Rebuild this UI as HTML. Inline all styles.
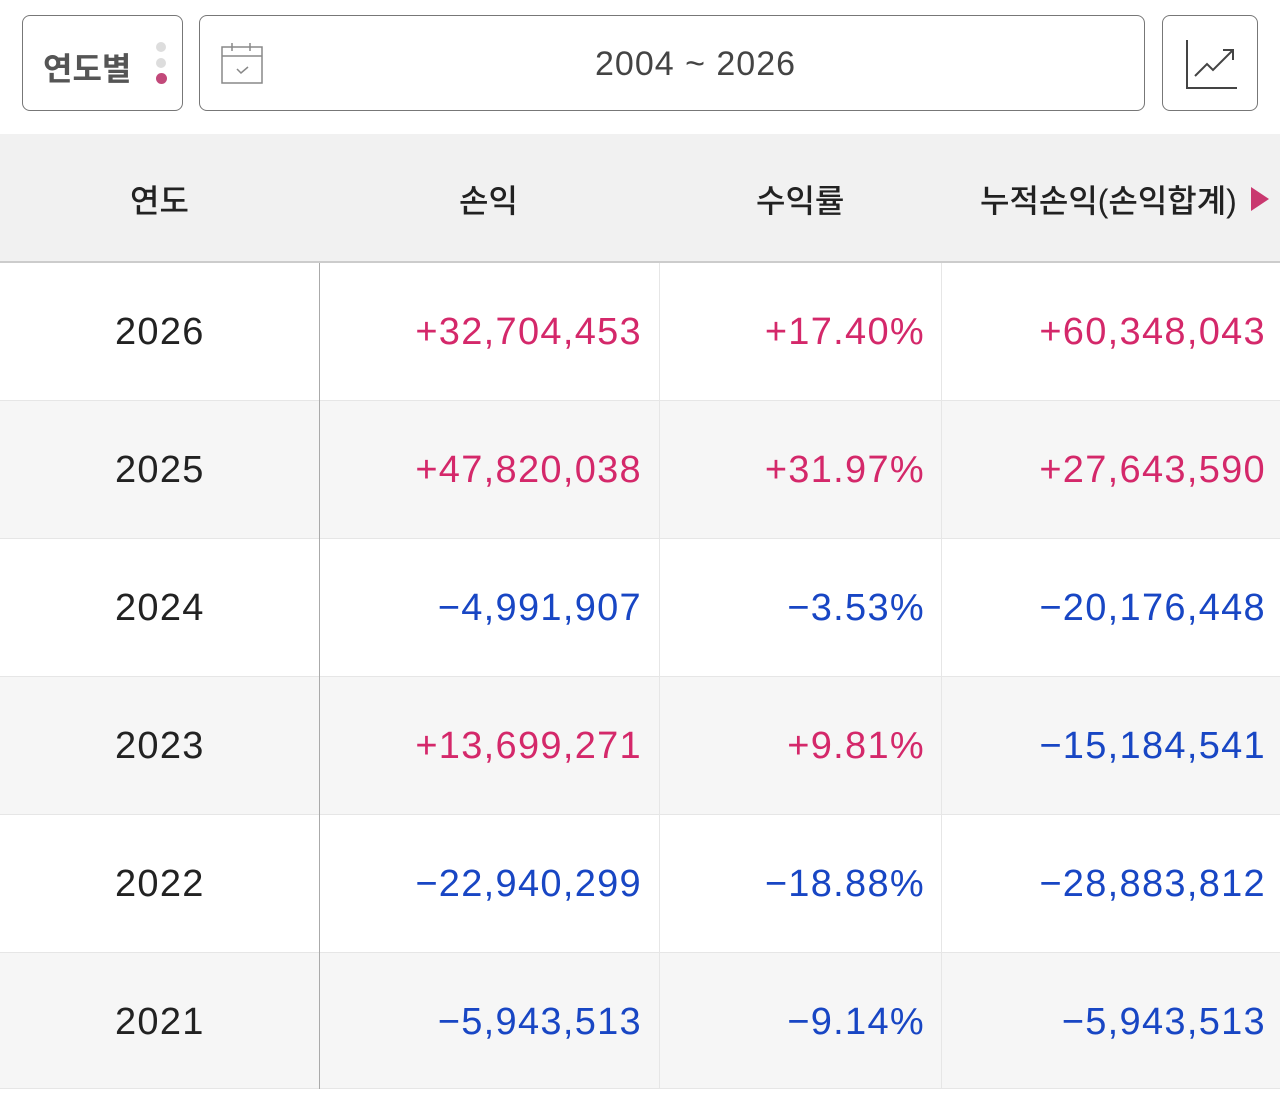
<!DOCTYPE html>
<html><head><meta charset="utf-8"><style>
*{margin:0;padding:0;box-sizing:border-box}
body{width:1280px;height:1112px;background:#fff;font-family:"Liberation Sans","Noto Sans CJK KR",sans-serif;position:relative;overflow:hidden}
.box{position:absolute;border:1.5px solid #777;border-radius:8px;background:#fff}
.hdr{position:absolute;left:0;top:134px;width:1280px;height:129px;background:#f1f1f1;border-bottom:2px solid #ccc}
.hdr div{position:absolute;top:42px;font-size:32px;color:#222;font-weight:500}
.row{position:absolute;left:0;width:1280px;height:138px;border-bottom:1px solid #e6e6e6}
.row span{position:absolute;top:46px;font-size:38px;line-height:46px;letter-spacing:1.3px}
.y{left:115px;color:#222}
.c1{right:638px}.c2{right:355px}.c3{right:14px}
.r{color:#d4286a}.b{color:#1846c4}
.vl{position:absolute;top:263px;height:826px;width:1px}
</style></head><body>
<div class="box" style="left:22px;top:15px;width:161px;height:96px">
<div style="position:absolute;left:20px;top:28px;font-size:32px;color:#555;font-weight:bold">연도별</div>
<div style="position:absolute;left:133px;top:26px;width:10px;height:10px;border-radius:50%;background:#ddd"></div>
<div style="position:absolute;left:133px;top:42px;width:10px;height:10px;border-radius:50%;background:#ddd"></div>
<div style="position:absolute;left:133px;top:57px;width:11px;height:11px;border-radius:50%;background:#c2497a"></div>
</div>
<div class="box" style="left:199px;top:15px;width:946px;height:96px">
<svg style="position:absolute;left:20px;top:26px" width="44" height="44" viewBox="0 0 44 44" fill="none" stroke="#888" stroke-width="1.5"><rect x="2" y="5" width="40" height="36"/><line x1="2" y1="14" x2="42" y2="14"/><line x1="12" y1="1" x2="12" y2="9"/><line x1="30" y1="1" x2="30" y2="9"/><path d="M17 27l4 4 7-6"/></svg>
<div style="position:absolute;left:395px;top:29px;font-size:34px;color:#444;letter-spacing:1px;white-space:nowrap">2004 ~ 2026</div>
</div>
<div class="box" style="left:1162px;top:15px;width:96px;height:96px">
<svg style="position:absolute;left:20px;top:22px" width="56" height="56" viewBox="0 0 56 56" fill="none" stroke="#444" stroke-width="2"><path d="M4 2v48h50"/><path d="M12 38l12-12 6 6 20-20"/><path d="M40 12h10v10"/></svg>
</div>
<div class="hdr">
<div style="left:130px">연도</div>
<div style="left:459px">손익</div>
<div style="left:756px">수익률</div>
<div style="left:980px">누적손익(손익합계)</div>
<svg style="position:absolute;left:1251px;top:53px" width="20" height="24"><path d="M0 0L18 12L0 24Z" fill="#c9386f"/></svg>
</div>
<div class="row" style="top:263px;background:#fff"><span class="y">2026</span><span class="c1 r">+32,704,453</span><span class="c2 r">+17.40%</span><span class="c3 r">+60,348,043</span></div>
<div class="row" style="top:401px;background:#f6f6f6"><span class="y">2025</span><span class="c1 r">+47,820,038</span><span class="c2 r">+31.97%</span><span class="c3 r">+27,643,590</span></div>
<div class="row" style="top:539px;background:#fff"><span class="y">2024</span><span class="c1 b">−4,991,907</span><span class="c2 b">−3.53%</span><span class="c3 b">−20,176,448</span></div>
<div class="row" style="top:677px;background:#f6f6f6"><span class="y">2023</span><span class="c1 r">+13,699,271</span><span class="c2 r">+9.81%</span><span class="c3 b">−15,184,541</span></div>
<div class="row" style="top:815px;background:#fff"><span class="y">2022</span><span class="c1 b">−22,940,299</span><span class="c2 b">−18.88%</span><span class="c3 b">−28,883,812</span></div>
<div class="row" style="top:953px;background:#f6f6f6;height:136px"><span class="y">2021</span><span class="c1 b">−5,943,513</span><span class="c2 b">−9.14%</span><span class="c3 b">−5,943,513</span></div>
<div class="vl" style="left:319px;background:#aaa"></div>
<div class="vl" style="left:659px;background:#e6e6e6"></div>
<div class="vl" style="left:941px;background:#e6e6e6"></div>
</body></html>
